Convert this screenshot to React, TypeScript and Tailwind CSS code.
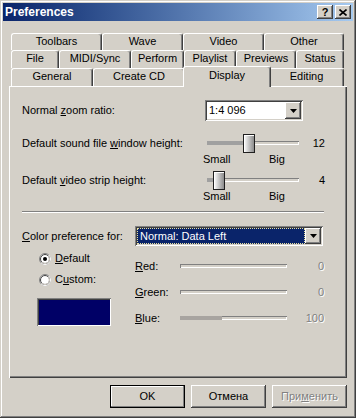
const RAISED =
  "shadow-[inset_-1px_-1px_#404040,inset_1px_1px_#ffffff,inset_-2px_-2px_#808080,inset_2px_2px_#d4d0c8]";
const SUNKEN =
  "shadow-[inset_1px_1px_#808080,inset_-1px_-1px_#ffffff,inset_2px_2px_#404040,inset_-2px_-2px_#d4d0c8]";

function Arrow() {
  return (
    <svg width="7" height="4" viewBox="0 0 7 4" aria-hidden>
      <path d="M0 0h7L3.5 4z" fill="#000" />
    </svg>
  );
}

function DropButton() {
  return (
    <div className={`flex h-full w-[16px] items-center justify-center bg-[#d4d0c8] ${RAISED}`}>
      <Arrow />
    </div>
  );
}

function Tab({ label, w }: { label: string; w: string }) {
  return (
    <div
      className={`${w} flex h-full items-start justify-center rounded-t-[3px] border-l border-t border-r border-white border-r-[#404040] bg-[#d4d0c8] pt-[2px] shadow-[inset_-1px_0_#808080]`}
    >
      {label}
    </div>
  );
}

function Radio({ checked }: { checked?: boolean }) {
  return (
    <svg width="12" height="12" viewBox="0 0 12 12" aria-hidden>
      <circle cx="6" cy="6" r="5.5" fill="#fff" stroke="#808080" />
      <path d="M2.1 9.9A5.5 5.5 0 0 0 9.9 2.1" fill="none" stroke="#fff" />
      <circle cx="6" cy="6" r="4.5" fill="#fff" stroke="#404040" />
      <path d="M2.8 9.2A4.5 4.5 0 0 0 9.2 2.8" fill="none" stroke="#d4d0c8" />
      {checked && <circle cx="6" cy="6" r="2" fill="#000" />}
    </svg>
  );
}

function Slider({ thumb, fill }: { thumb: string; fill: string }) {
  return (
    <div className="w-[98px]">
      <div className="relative flex h-[20px] items-center">
        <div className={`ml-[4px] flex h-[4px] w-[92px] bg-[#d4d0c8] shadow-[inset_1px_1px_#808080,inset_-1px_-1px_#ffffff]`}>
          <div className={`${fill} bg-[#a0a0a0]`} />
        </div>
        <div
          className={`absolute top-[1px] ${thumb} h-[19px] w-[12px] border border-[#202020] bg-linear-to-r from-white to-[#8c8c8c] shadow-[inset_1px_1px_#ffffff]`}
        />
      </div>
      <div className="flex h-[12px] items-center">
        <span className="w-[66px]">Small</span>
        <span>Big</span>
      </div>
    </div>
  );
}

function ColorRow({ label, u, rest, value, fill }: { label?: string; u: string; rest: string; value: string; fill?: string }) {
  return (
    <div className="flex h-[26px] items-center">
      <span className="w-[45px]">
        {label}
        <span className="underline">{u}</span>
        {rest}
      </span>
      <div className="flex h-[4px] w-[107px] bg-[#d4d0c8] shadow-[inset_1px_1px_#808080,inset_-1px_-1px_#ffffff]">
        {fill && <div className={`${fill} bg-[#a8a4a0]`} />}
      </div>
      <span className="w-[37px] text-right text-[#808080] [text-shadow:1px_1px_0_#fff]">{value}</span>
    </div>
  );
}

function Button({ children, primary, disabled }: { children: React.ReactNode; primary?: boolean; disabled?: boolean }) {
  return (
    <div
      className={`flex h-[23px] w-[75px] items-center justify-center bg-[#d4d0c8] ${
        primary
          ? "border border-black shadow-[inset_-1px_-1px_#808080,inset_1px_1px_#ffffff]"
          : RAISED
      } ${disabled ? "text-[#808080] [text-shadow:1px_1px_0_#fff]" : ""}`}
    >
      {children}
    </div>
  );
}

export default function App() {
  return (
    <div className="flex h-[418px] w-[356px] select-none flex-col bg-[#d4d0c8] p-[3px] font-['Liberation_Sans',Arial,sans-serif] text-[11px] leading-none text-black shadow-[inset_-1px_-1px_#404040,inset_1px_1px_#d4d0c8,inset_-2px_-2px_#808080,inset_2px_2px_#ffffff]">
      {/* title bar */}
      <div className="flex h-[18px] items-center bg-linear-to-r from-[#0a246a] to-[#a6caf0] pl-[2px] pr-[2px]">
        <span className="text-[12px] font-bold text-white">Preferences</span>
        <div className="ml-auto flex gap-[2px]">
          <div className={`flex h-[14px] w-[16px] items-center justify-center bg-[#d4d0c8] text-[11px] font-bold ${RAISED}`}>
            ?
          </div>
          <div className={`flex h-[14px] w-[16px] items-center justify-center bg-[#d4d0c8] ${RAISED}`}>
            <svg width="8" height="7" viewBox="0 0 8 7" aria-hidden>
              <path d="M0.5 0.5l7 6M7.5 0.5l-7 6" stroke="#000" strokeWidth="1.6" />
            </svg>
          </div>
        </div>
      </div>

      <div className="flex flex-1 flex-col px-[6px] pt-[12px]">
        {/* tab rows */}
        <div className="flex flex-col pl-[2px] pr-[3px]">
          <div className="flex h-[17px]">
            <Tab label="Toolbars" w="w-[91px]" />
            <Tab label="Wave" w="w-[81px]" />
            <Tab label="Video" w="w-[81px]" />
            <Tab label="Other" w="w-[80px]" />
          </div>
          <div className="flex h-[18px]">
            <Tab label="File" w="w-[48px]" />
            <Tab label="MIDI/Sync" w="w-[72px]" />
            <Tab label="Perform" w="w-[53px]" />
            <Tab label="Playlist" w="w-[52px]" />
            <Tab label="Previews" w="w-[60px]" />
            <Tab label="Status" w="w-[48px]" />
          </div>
          <div className="flex h-[18px]">
            <Tab label="General" w="w-[82px]" />
            <Tab label="Create CD" w="w-[92px]" />
            <div className="relative z-10 -mx-[2px] -mt-[2px] flex h-[21px] w-[88px] items-start justify-center rounded-t-[3px] border-l border-t border-r border-white border-r-[#404040] bg-[#d4d0c8] pt-[3px] shadow-[inset_-1px_0_#808080]">
              Display
            </div>
            <Tab label="Editing" w="w-[75px]" />
          </div>
        </div>

        {/* tab page */}
        <div className="flex h-[292px] flex-col pl-[13px] pt-[14px] shadow-[inset_1px_1px_#ffffff,inset_-1px_-1px_#404040,inset_-2px_-2px_#808080]">
          <div className="flex h-[21px] items-center">
            <span className="w-[183px]">
              Normal <span className="underline">z</span>oom ratio:
            </span>
            <div className={`flex h-[21px] w-[98px] items-center bg-white p-[2px] ${SUNKEN}`}>
              <span className="flex-1 pl-[2px]">1:4 096</span>
              <DropButton />
            </div>
          </div>

          <div className="mt-[12px] flex items-start">
            <span className="flex h-[20px] w-[181px] items-center">
              Default sound file&nbsp;<span className="underline">w</span>indow height:
            </span>
            <Slider thumb="left-[40px]" fill="w-[36px]" />
            <span className="flex h-[20px] w-[24px] items-center justify-end">12</span>
          </div>

          <div className="mt-[5px] flex items-start">
            <span className="flex h-[20px] w-[181px] items-center">
              Default&nbsp;<span className="underline">v</span>ideo strip height:
            </span>
            <Slider thumb="left-[10px]" fill="w-[6px]" />
            <span className="flex h-[20px] w-[24px] items-center justify-end">4</span>
          </div>

          <div className="mt-[9px] h-[2px] w-[302px] border-b border-t border-b-white border-t-[#808080]" />

          <div className="mt-[13px] flex h-[20px] items-center">
            <span className="w-[113px]">
              <span className="underline">C</span>olor preference for:
            </span>
            <div className={`flex h-[20px] w-[188px] items-stretch bg-white p-[2px] ${SUNKEN}`}>
              <span className="flex flex-1 items-center border border-dotted border-[#e8e0a0] bg-[#0a246a] pl-[2px] text-white">
                Normal: Data Left
              </span>
              <DropButton />
            </div>
          </div>

          <div className="flex">
            <div className="flex w-[113px] flex-col pt-[6px]">
              <div className="flex h-[13px] items-center gap-[4px] pl-[17px]">
                <Radio checked />
                <span>
                  <span className="underline">D</span>efault
                </span>
              </div>
              <div className="mt-[8px] flex h-[13px] items-center gap-[4px] pl-[17px]">
                <Radio />
                <span>
                  C<span className="underline">u</span>stom:
                </span>
              </div>
              <div className="ml-[15px] mt-[12px] h-[28px] w-[74px] bg-[#000066] shadow-[inset_1px_1px_#808080,inset_-1px_-1px_#ffffff,inset_2px_2px_#404040]" />
            </div>
            <div className="flex flex-col pt-[7px]">
              <ColorRow u="R" rest="ed:" value="0" />
              <ColorRow u="G" rest="reen:" value="0" />
              <ColorRow u="B" rest="lue:" value="100" fill="w-[42px]" />
            </div>
          </div>
        </div>

        <div className="mt-[7px] flex justify-end gap-[6px]">
          <Button primary>OK</Button>
          <Button>Отмена</Button>
          <Button disabled>
            При<span className="underline">м</span>енить
          </Button>
        </div>
      </div>
    </div>
  );
}
